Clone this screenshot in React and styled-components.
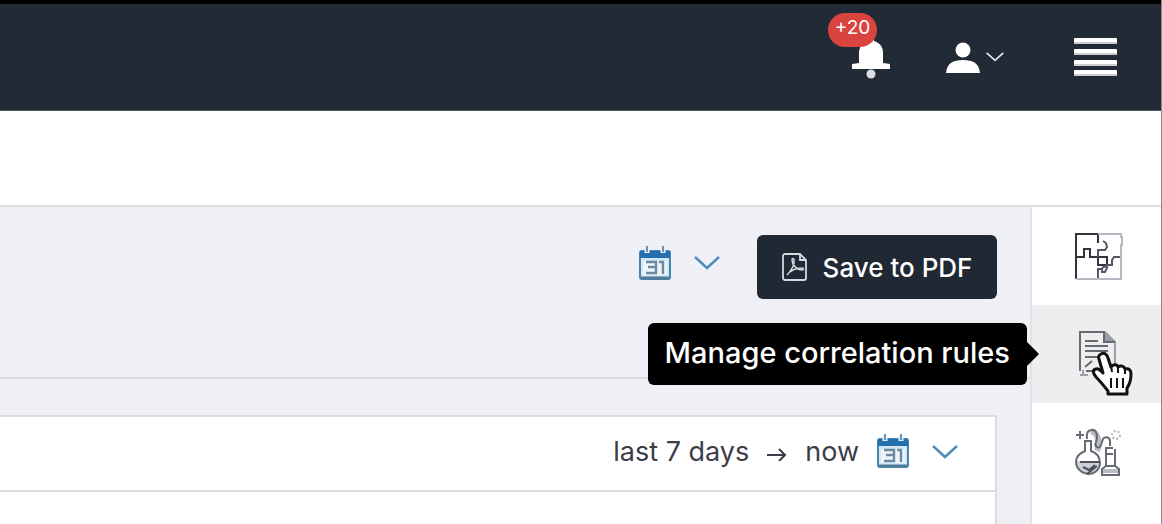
import React from "react";
import styled, { createGlobalStyle } from "styled-components";

const GlobalStyle = createGlobalStyle`
  *, *::before, *::after { box-sizing: border-box; }
  body { margin: 0; background: #fff; font-family: Inter, "Liberation Sans", sans-serif; color: #3d3d47; }
  button { font-family: inherit; border: 0; padding: 0; margin: 0; background: none; cursor: pointer; color: inherit; }
  svg { display: block; flex: none; }
`;

const Page = styled.div`
  min-height: 100vh;
  display: flex;
  flex-direction: column;
  border-right: 1px solid #8b8b8e;
`;

const TopBar = styled.header`
  height: 111px;
  padding: 0 44px 0 0;
  border-top: 4px solid #000;
  border-bottom: 1px solid #4b525c;
  background: #222a36;
  display: flex;
  align-items: center;
  justify-content: flex-end;
`;

const BarButton = styled.button`
  display: flex;
  align-items: center;
  gap: 6px;
  height: 44px;
  color: #fff;
  position: relative;
  margin-left: ${(p) => p.$space || 0}px;
`;

const CountBadge = styled.span`
  position: absolute;
  top: -22px;
  left: -23px;
  width: 49px;
  height: 34px;
  border-radius: 17px;
  background: #da443f;
  color: #fff;
  font-size: 19px;
  line-height: 30px;
  text-align: center;
`;

const SubBar = styled.div`
  height: 96px;
  border-bottom: 2px solid #dedede;
  background: #fff;
`;

const Body = styled.div`
  flex: 1;
  display: flex;
`;

const Main = styled.main`
  flex: 1;
  min-width: 0;
  display: flex;
  flex-direction: column;
  background: #eff0f6;
  padding-right: 33px;
`;

const Toolbar = styled.section`
  height: 172px;
  margin-right: -33px;
  padding: 28px 33px 0 0;
  border-bottom: 2px solid #dcdce0;
  display: flex;
  align-items: flex-start;
  justify-content: flex-end;
  gap: 37px;
`;

const DateButton = styled.button`
  display: flex;
  align-items: center;
  gap: 23px;
  height: ${(p) => p.$height}px;
`;

const SaveButton = styled.button`
  height: 64px;
  width: 240px;
  border-radius: 6px;
  background: #202834;
  color: #fff;
  font-size: 26px;
  font-weight: 500;
  display: flex;
  align-items: center;
  justify-content: center;
  gap: 16px;
`;

const Card = styled.section`
  flex: 1;
  margin-top: 36px;
  background: #fff;
  border: 2px solid #dcdcdf;
  border-width: 2px 2px 0 0;
`;

const CardHeader = styled.header`
  height: 75px;
  padding: 0 37px 4px 0;
  border-bottom: 2px solid #dcdcdf;
  display: flex;
  align-items: center;
  justify-content: flex-end;
  gap: 18px;
  font-size: 27px;
  line-height: 32px;
`;

const Rail = styled.nav`
  width: 131px;
  flex: none;
  background: #fff;
  border-left: 2px solid #e2e2e4;
  display: flex;
  flex-direction: column;
`;

const RailButton = styled.button`
  position: relative;
  width: 100%;
  height: 98px;
  display: flex;
  align-items: center;
  justify-content: center;
  padding-left: 3px;
  background: ${(p) => (p.$active ? "#eeeeee" : "#fff")};
`;

const Tooltip = styled.span`
  position: absolute;
  right: calc(100% + 5px);
  top: 18px;
  height: 62px;
  padding: 0 17px;
  border-radius: 6px;
  background: #000;
  color: #fff;
  font-size: 29px;
  font-weight: 500;
  line-height: 60px;
  white-space: nowrap;

  &::after {
    content: "";
    position: absolute;
    left: 100%;
    top: 19px;
    border: 12px solid transparent;
    border-left-color: #000;
    border-right-width: 0;
  }
`;

const Pointer = styled.svg`
  position: absolute;
  left: 57px;
  top: 46px;
`;

const BellIcon = () => (
  <svg width="40" height="44" viewBox="0 0 40 44" fill="#fff" aria-hidden="true">
    <path d="M20 3c2 0 3 1 3 3 6 2 9 6 9 12v10l7 1v5H1v-5l7-1V18C8 12 11 8 17 6c0-2 1-3 3-3Z" />
    <circle cx="20" cy="39" r="4.5" fill="#dcdde0" />
  </svg>
);

const UserIcon = () => (
  <svg width="34" height="34" viewBox="0 0 34 34" fill="#fff" aria-hidden="true">
    <circle cx="17" cy="10" r="7.5" />
    <path d="M0 33c1-10 7-13 17-13s16 3 17 13Z" />
  </svg>
);

const Chevron = ({ width, height, color }) => (
  <svg width={width} height={height} viewBox="0 0 26 14" fill="none" stroke={color} strokeWidth="2.4" aria-hidden="true">
    <path d="M1 1l12 11L25 1" />
  </svg>
);

const MenuIcon = () => (
  <svg width="43" height="40" viewBox="0 0 43 40" aria-hidden="true">
    {[1, 12, 23, 33].map((y) => (
      <g key={y}>
        <rect y={y} width="43" height="6" rx="1" fill="#fff" />
        <rect y={y + 4} width="43" height="2" fill="#c9ccd3" />
      </g>
    ))}
  </svg>
);

const CalendarIcon = () => (
  <svg width="32" height="35" viewBox="0 0 32 35" fill="none" aria-hidden="true">
    <rect x="1" y="5" width="30" height="28" rx="2" fill="#d3e8f7" stroke="#4685b2" strokeWidth="2" />
    <path d="M1 5h30v7H1z" fill="#2370ad" />
    <path d="M8 1v6M24 1v6" stroke="#eff0f6" strokeWidth="5" />
    <path d="M8 0v6M24 0v6" stroke="#6295b8" strokeWidth="2" />
    <path d="M4 15h24v14H4z" fill="#f0f3f8" />
    <path d="M7 16h10v11H7M9 21h8M20 16h4v12" stroke="#688aa4" strokeWidth="2.4" />
    <path d="M2 32h28" stroke="#527b98" strokeWidth="3" />
  </svg>
);

const PdfIcon = () => (
  <svg width="25" height="28" viewBox="0 0 25 28" fill="none" stroke="#d5d8de" strokeWidth="1.8" aria-hidden="true">
    <path d="M3 1h15l6 6v18a2 2 0 0 1-2 2H3a2 2 0 0 1-2-2V3a2 2 0 0 1 2-2Z" />
    <path d="M18 1v6h6" />
    <path d="M5 22c3-3 8-10 7-15 0-2-2-2-2 0 0 5 5 10 10 10 2 0 2-2 0-2-6 0-12 3-15 7Z" strokeWidth="1.5" />
  </svg>
);

const PuzzleIcon = () => (
  <svg width="49" height="50" viewBox="0 -2 49 50" fill="none" stroke="#30343b" strokeWidth="2" aria-hidden="true">
    <path d="M24 1H2v45M24 1v9" />
    <path d="M2 24h8v-8h6v8h17v8h-9v-8" />
    <path d="M24 24v-7h7l2-3-1-4-3-2M24 46V36h4v3h3l2-4v-3h5v-5l2-3h7M28 35l4-2" stroke="#555961" />
    <path d="M24 1h23v3h1v8h-1v34H2" stroke="#b7bac2" />
  </svg>
);

const RulesIcon = () => (
  <svg width="40" height="46" viewBox="0 0 40 46" fill="none" stroke="#666a73" strokeWidth="2" aria-hidden="true">
    <path d="M2 40V1h25" />
    <path d="M27 1l10 10v26" stroke="#9a9da5" />
    <path d="M26 1v10h11" fill="#9a9da5" />
    <path d="M7 10h13M7 15h23M7 20h23M7 26h13M7 36l7-6M8 40h10" />
    <path d="M2 44h6M5 39v5h5" stroke="#9a9da5" />
  </svg>
);

const LabIcon = () => (
  <svg width="46" height="48" viewBox="0 0 46 48" fill="none" stroke="#666a73" strokeWidth="2" aria-hidden="true">
    <path d="M2 33h22c0 6-4 11-10 13C6 45 2 40 2 33Z" fill="#cfd1d8" stroke="none" />
    <path d="M9 13h8M10 14v9C5 25 1 29 1 34c0 6 5 11 12 12 7 0 12-5 12-11 0-6-3-10-9-12v-9" />
    <path d="M5 34h20M8 39l6 3 6-5M12 46l10-8" stroke="#4d525b" />
    <path d="M16 3c7 2 10 12 6 20" stroke="#b9bcc4" strokeWidth="6" />
    <path d="M12 11c-1-6 1-9 5-9 5-1 6 7 4 12s3 8 5 3l2-6c2-3 6-2 7 1v6" />
    <path d="M30 20h8M31 21v17l-4 3v6h17v-6l-4-3V21M31 26h7M31 38h8" />
    <path d="M28 43h15" stroke="#b9bcc4" strokeWidth="4" />
    <path d="M5 3v8M1 7h8" />
    <circle cx="41" cy="7" r="4" stroke="#b4b7be" strokeDasharray="2 2" />
  </svg>
);

const HandPointer = () => (
  <Pointer width="44" height="46" viewBox="0 0 44 46" aria-hidden="true">
    <path
      d="M12 3c4-2 6 1 7 4l3 9c2-3 6-3 7 0 3-2 6-1 7 2 4-1 6 1 6 5 0 6-1 10-4 14v6H19v-3C15 35 11 30 7 26c-3-4-4-7 0-8 2-1 4 1 7 4L10 8c-1-2 0-4 2-5Z"
      fill="#fff" stroke="#111" strokeWidth="3" strokeLinejoin="round"
    />
    <path d="M22 14l1 7M29 17v5M36 19v4M22 27v10M28 27v10M34 27v10" fill="none" stroke="#111" strokeWidth="2" />
  </Pointer>
);

const DatePicker = ({ height, label }) => (
  <DateButton $height={height} aria-label={label}>
    <CalendarIcon />
    <Chevron width={26} height={14} color="#4c8db8" />
  </DateButton>
);

export default function App() {
  return (
    <>
      <GlobalStyle />
      <Page>
        <TopBar>
          <BarButton aria-label="Notifications">
            <BellIcon />
            <CountBadge>+20</CountBadge>
          </BarButton>
          <BarButton aria-label="Account" $space={55}>
            <UserIcon />
            <Chevron width={18} height={12} color="#e3e5e9" />
          </BarButton>
          <BarButton aria-label="Menu" $space={70}>
            <MenuIcon />
          </BarButton>
        </TopBar>
        <SubBar />
        <Body>
          <Main>
            <Toolbar>
              <DatePicker height={56} label="Choose report dates" />
              <SaveButton>
                <PdfIcon />
                Save to PDF
              </SaveButton>
            </Toolbar>
            <Card>
              <CardHeader>
                <span>last 7 days</span>
                <svg width="20" height="18" viewBox="0 0 20 18" fill="none" stroke="#3d3d47" strokeWidth="2" aria-hidden="true">
                  <path d="M0 12h18M12 6l6 6-6 6" />
                </svg>
                <span>now</span>
                <DatePicker height={40} label="Choose card dates" />
              </CardHeader>
            </Card>
          </Main>
          <Rail>
            <RailButton aria-label="Integrations">
              <PuzzleIcon />
            </RailButton>
            <RailButton $active>
              <RulesIcon />
              <Tooltip>Manage correlation rules</Tooltip>
              <HandPointer />
            </RailButton>
            <RailButton aria-label="Lab">
              <LabIcon />
            </RailButton>
          </Rail>
        </Body>
      </Page>
    </>
  );
}
